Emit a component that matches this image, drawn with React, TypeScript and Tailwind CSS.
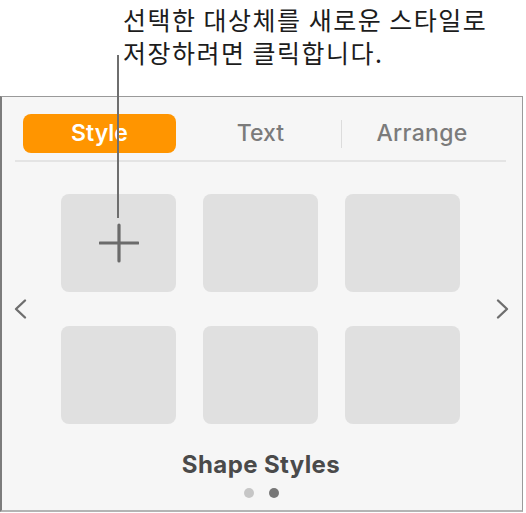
const latin = { fontFamily: "Inter, 'Liberation Sans', sans-serif" };

function Tile({ plus }: { plus?: boolean }) {
  return (
    <div className="h-[98px] w-[115px] rounded-[8px] bg-[#e0e0e0] flex items-center justify-center">
      {plus && (
        <svg width="40" height="40" viewBox="0 0 40 40" className="text-[#6b6b6b]">
          <path d="M20 2v36M1 20h38" stroke="currentColor" strokeWidth="3.2" strokeLinecap="round" />
        </svg>
      )}
    </div>
  );
}

function Chevron({ dir }: { dir: "left" | "right" }) {
  return (
    <svg width="14" height="22" viewBox="0 0 14 22" className="text-[#6e6e6e]">
      <path
        d={dir === "left" ? "M12 2.5 3 11l9 8.5" : "M2 2.5 11 11l-9 8.5"}
        fill="none"
        stroke="currentColor"
        strokeWidth="2.4"
        strokeLinecap="round"
        strokeLinejoin="round"
      />
    </svg>
  );
}

export default function App() {
  return (
    <div className="relative w-[526px] h-[513px] bg-white overflow-hidden">
      {/* 설명 문구 */}
      <div
        className="h-[96px] pl-[123px] pt-[3px] text-[25px] leading-[33px] tracking-[1.5px] text-[#1c1c1c]"
        style={{ fontFamily: "'Noto Sans CJK KR', 'Noto Sans', sans-serif" }}
      >
        <p>선택한 대상체를 새로운 스타일로</p>
        <p>저장하려면 클릭합니다.</p>
      </div>

      {/* 패널 */}
      <div
        className="w-[523px] h-[416px] border-t border-r border-l-2 border-b-2 border-t-[#9a9a9a] border-r-[#9a9a9a] border-l-[#7c7c7c] border-b-[#b4b4b4] bg-[#f6f6f6] flex flex-col"
        style={latin}
      >
        <div className="mt-[17px] ml-[17px] flex h-[39px] w-[483px]">
          <div className="w-[161px] px-[4px]">
            <div className="h-full rounded-[8px] bg-[#ff9500] flex items-center justify-center text-white text-[23px] font-semibold">
              Style
            </div>
          </div>
          <div className="w-[161px] flex items-center justify-center text-[23px] font-medium text-[#7b7b7b]">
            Text
          </div>
          <div className="w-px self-center h-[28px] bg-[#dcdcdc]" />
          <div className="w-[160px] flex items-center justify-center text-[23px] font-medium text-[#7b7b7b] tracking-[0.3px]">
            Arrange
          </div>
        </div>
        <div className="mt-[7px] ml-[13px] h-[2px] w-[491px] bg-[#e4e4e4]" />

        <div className="mt-[32px] flex items-center">
          <div className="ml-[11px]">
            <Chevron dir="left" />
          </div>
          <div className="ml-[34px] grid grid-cols-[115px_115px_115px] gap-x-[27px] gap-y-[34px]">
            <Tile plus />
            <Tile />
            <Tile />
            <Tile />
            <Tile />
            <Tile />
          </div>
          <div className="ml-[36px]">
            <Chevron dir="right" />
          </div>
        </div>

        <div className="mt-[27px] text-center text-[24px] leading-[28px] font-bold tracking-[0.4px] text-[#4a4a4a] pr-[2px]">
          Shape Styles
        </div>
        <div className="mt-[9px] flex justify-center gap-[15px] pr-[2px]">
          <span className="w-[10px] h-[10px] rounded-full bg-[#c6c6c6]" />
          <span className="w-[10px] h-[10px] rounded-full bg-[#777777]" />
        </div>
      </div>

      {/* 콜아웃 선 */}
      <div className="absolute left-[117px] top-[55px] w-[2px] h-[163px] bg-[#6e6e6e]" />
    </div>
  );
}
